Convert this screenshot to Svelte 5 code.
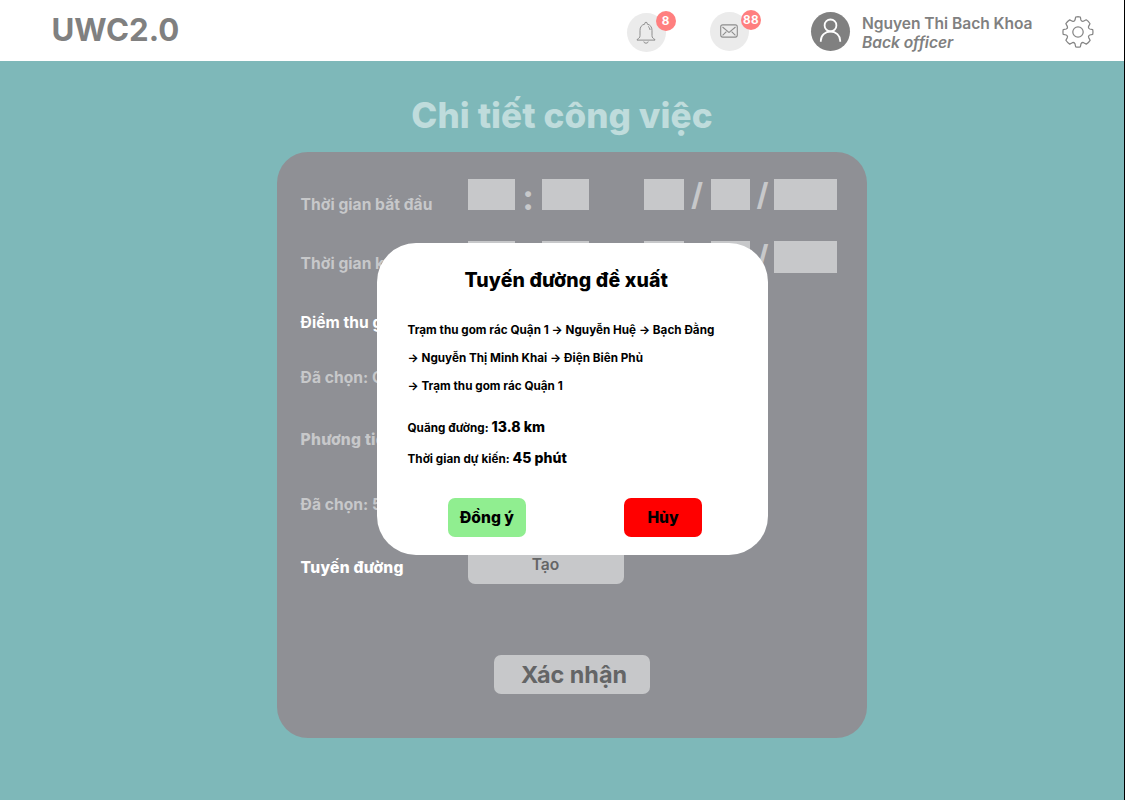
<script>
  const labels = [
    { text: 'Thời gian bắt đầu', top: 0 },
    { text: 'Thời gian kết thúc', top: 39 },
    { text: 'Điểm thu gom', top: 39, strong: true },
    { text: 'Đã chọn: Quận 1', top: 35 },
    { text: 'Phương tiện', top: 42, heavy: true },
    { text: 'Đã chọn: 59', top: 45 },
    { text: 'Tuyến đường', top: 43, strong: true, heavy: true }
  ];
  const times = ['start', 'end'];
</script>

<div class="page">
  <header>
    <div class="brand">UWC2.0</div>
    <div class="round bell">
      <svg width="20" height="24" viewBox="0 0 20 24" fill="none" stroke="#8d8d8d" stroke-width="1">
        <path d="M8.8 3.1V2.3Q8.8 1.3 10 1.3T11.2 2.3V3.1C14.5 3.8 16 6.2 16 9.4V14.5C16 16.6 17.1 17.6 19 18.6V19.1H1V18.6C2.9 17.6 4 16.6 4 14.5V9.4C4 6.2 5.500 3.8 8.8 3.1Z" />
        <path d="M7.800 20.500Q8 22.200 10 22.200T12.200 20.500M12 5.400Q14 6.500 14.100 9" />
      </svg>
      <span class="badge">8</span>
    </div>
    <div class="round mail">
      <svg width="18" height="14" viewBox="0 0 18 14" fill="none" stroke="#8d8d8d" stroke-width="1.1">
        <rect x=".7" y=".9" width="16.600" height="12.200" rx="2" />
        <path d="M2.500 3 8 7.700Q9 8.500 10 7.700L15.500 3M2.600 11.300 6.400 7.600M15.400 11.300 11.600 7.600" />
      </svg>
      <span class="badge">88</span>
    </div>
    <div class="avatar">
      <svg width="39" height="39" viewBox="0 0 39 39" fill="none" stroke="#fff" stroke-width="1.800">
        <circle cx="19.500" cy="13.400" r="5.900" />
        <path d="M9.800 29.700V28.700A9.700 9.200 0 0 1 29.200 28.700V29.700" />
      </svg>
    </div>
    <div class="user">
      <div class="name">Nguyen Thi Bach Khoa</div>
      <div class="role">Back officer</div>
    </div>
    <svg class="gear" width="32" height="32" viewBox="0 0 32 32" fill="none" stroke="#858585" stroke-width="1.250" stroke-linejoin="round">
      <path d="M13.700 1Q16 .5 18.300 1L18.900 3.900Q19.600 5.600 21.400 5.200L24.200 3.800Q26.500 5.200 28 7.700L26.600 10.400Q26 12.200 27.700 13L30.700 13.700Q31.200 16 30.700 18.300L27.800 19Q26 19.800 26.700 21.600L28.100 24.300Q26.600 26.700 24.300 28.100L21.600 26.700Q19.800 26 19 27.800L18.300 30.900Q16 31.400 13.700 30.900L13 27.800Q12.200 26 10.400 26.700L7.700 28.100Q5.300 26.600 3.900 24.300L5.300 21.600Q6 19.800 4.200 19L1.200 18.300Q.7 16 1.200 13.700L4.200 13Q6 12.200 5.300 10.400L3.900 7.700Q5.400 5.300 7.700 3.900L10.400 5.200Q12.300 5.900 13 4.100Z" />
      <circle cx="16" cy="16" r="5.200" />
    </svg>
  </header>

  <main>
    <h1>Chi tiết công việc</h1>
    <section class="card">
      <div class="labels">
        {#each labels as label}
          <div class="label" class:strong={label.strong} class:heavy={label.heavy} style="margin-top: {label.top}px">{label.text}</div>
        {/each}
      </div>
      <div class="fields">
        {#each times as time (time)}
          <div class="stamp">
            <i class="hm"></i><b>:</b><i class="hm"></i>
            <span class="gap"></span>
            <i class="dm"></i><b class="slash">/</b><i class="dm"></i><b class="slash second">/</b><i class="year"></i>
          </div>
        {/each}
        <button class="create">Tạo</button>
        <button class="confirm">Xác nhận</button>
      </div>
    </section>
  </main>

  <div class="modal">
    <h2>Tuyến đường đề xuất</h2>
    <div class="route">
      <div>Trạm thu gom rác Quận 1 → Nguyễn Huệ → Bạch Đằng</div>
      <div>→ Nguyễn Thị Minh Khai → Điện Biên Phủ</div>
      <div>→ Trạm thu gom rác Quận 1</div>
    </div>
    <div class="facts">
      <div>Quãng đường: <strong>13.8 km</strong></div>
      <div>Thời gian dự kiến: <strong>45 phút</strong></div>
    </div>
    <div class="actions">
      <button class="ok">Đồng ý</button>
      <button class="cancel">Hủy</button>
    </div>
  </div>
</div>

<style>
  :global(body) { background: #7eb8b9; overflow: hidden; }
  .page {
    position: relative;
    box-sizing: border-box;
    width: 1125px;
    height: 800px;
    overflow: hidden;
    background: #7eb8b9;
    border-right: 1px solid #000;
    font-family: Inter, sans-serif;
    font-weight: 700;
    white-space: nowrap;
  }
  header {
    display: flex;
    align-items: flex-start;
    height: 60.500px;
    background: #fff;
    color: #808080;
  }
  .brand { box-sizing: border-box; width: 627px; padding: 10px 0 0 51.500px; font-size: 31.200px; line-height: 40px; font-weight: 750; }
  .round {
    position: relative;
    display: flex;
    align-items: center;
    justify-content: center;
    width: 39px;
    height: 39px;
    border-radius: 50%;
    background: #ebebeb;
  }
  .bell { margin-top: 13px; }
  .bell svg { margin: 0 1px 0 0; }
  .mail { margin: 12px 0 0 44px; }
  .mail svg { margin: 0 1px 1px 0; }
  .badge {
    position: absolute;
    left: 28.500px;
    top: -2.500px;
    width: 20px;
    height: 20px;
    border-radius: 50%;
    background: #ff7f7f;
    color: #fff;
    font-size: 11.700px;
    line-height: 20px;
    text-align: center;
  }
  .mail .badge { left: 31px; letter-spacing: .3px; }
  .avatar { width: 39px; height: 39px; margin: 12px 0 0 61.500px; border-radius: 50%; background: #808080; }
  .user { width: 200px; margin: 13.500px 0 0 12.500px; font-size: 15.600px; line-height: 19px; font-weight: 600; letter-spacing: -.05px; }
  .role { font-style: italic; }
  .gear { display: block; margin-top: 15.500px; }
  main { display: flex; flex-direction: column; width: 1124px; }
  h1 { margin: 30px 0 0; text-align: center; color: #bfdcdc; font-size: 35.100px; line-height: 48px; font-weight: 800; letter-spacing: .08px; }
  .card {
    display: flex;
    box-sizing: border-box;
    width: 590px;
    height: 586px;
    margin: 13.500px 0 0 277px;
    padding-left: 24px;
    border-radius: 31px;
    background: #8f9095;
  }
  .labels { width: 166.500px; padding-top: 43px; }
  .label { height: 20px; margin-left: -.4px; font-size: 15.600px; line-height: 20px; color: #c7c8ca; letter-spacing: .04px; }
  .label.strong { color: #fff; }
  .label.heavy { font-weight: 800; letter-spacing: .25px; }
  .fields { padding-top: 26.500px; }
  .stamp { display: flex; height: 31.500px; margin-bottom: 31px; color: #c7c8ca; }
  .stamp i { background: #c7c8ca; }
  .stamp b { width: 27px; text-align: center; font-size: 35px; line-height: 37px; font-weight: 700; }
  .stamp b.slash { font-size: 31px; line-height: 32px; }
  .stamp b.slash.second { box-sizing: border-box; width: 24px; padding-left: 1px; }
  .hm { width: 47px; }
  .gap { width: 55.500px; }
  .dm { width: 39.500px; }
  .year { width: 62.500px; }
  button { display: block; border: 0; padding: 0; border-radius: 7px; font: inherit; }
  .create { width: 156px; height: 39px; margin-top: 272px; background: #c7c8ca; color: #646566; font-size: 15.600px; font-weight: 600; }
  .confirm { width: 156px; height: 39px; margin: 71.500px 0 0 26.500px; padding-left: 4px; background: #c7c8ca; color: #646566; font-size: 23.400px; font-weight: 750; }
  .modal {
    position: absolute;
    left: 377px;
    top: 242.500px;
    box-sizing: border-box;
    width: 391px;
    height: 312.500px;
    padding: 24px 31px 0 30.500px;
    border-radius: 39px;
    background: #fff;
    color: #000;
  }
  h2 { margin: 0 0 23px -12px; text-align: center; font-size: 19.500px; line-height: 26px; font-weight: 800; letter-spacing: .14px; }
  .route { font-size: 11.700px; line-height: 28px; letter-spacing: .02px; }
  .facts { margin-top: 11px; font-size: 11.700px; line-height: 31px; letter-spacing: .04px; }
  .facts div { height: 31.300px; }
  .facts strong { font-size: 14.040px; font-weight: 800; }
  .actions { display: flex; gap: 98px; margin: 24.900px 0 0 40.500px; }
  .actions button { width: 78px; height: 39px; font-size: 15.600px; font-weight: 800; }
  .ok { background: #90ee90; }
  .cancel { background: #f00; }
</style>
